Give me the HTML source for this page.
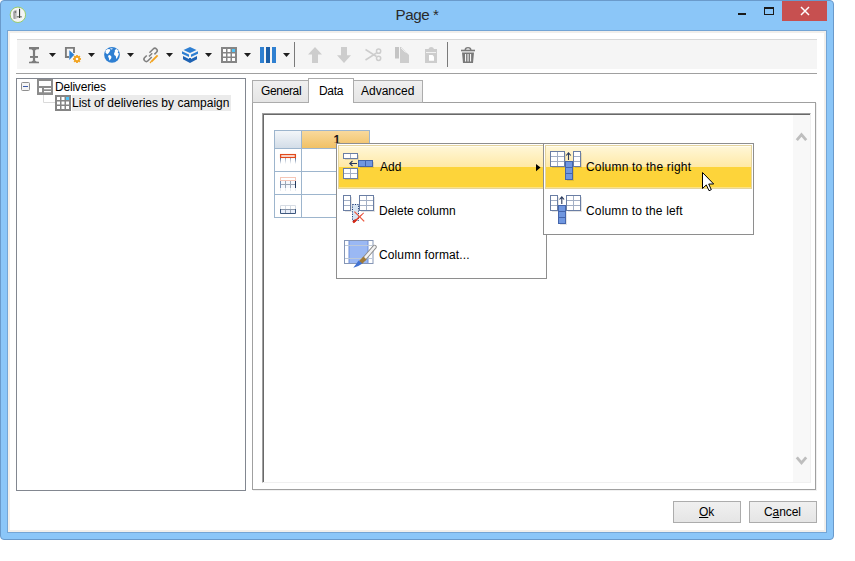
<!DOCTYPE html>
<html><head><meta charset="utf-8">
<style>
*{box-sizing:border-box;margin:0;padding:0}
html,body{width:855px;height:561px;overflow:hidden;background:#fff;font-family:"Liberation Sans",sans-serif;font-size:12px;color:#000}
.a{position:absolute}
.t{position:absolute;white-space:nowrap;line-height:14px}
svg{position:absolute;left:0;top:0;overflow:visible}
</style></head><body>
<!-- window frame -->
<div class="a" style="left:0;top:0;width:834px;height:540px;background:#8BC6F8;border:1px solid #6A9ACB;border-radius:4px"></div>
<div class="a" style="left:7px;top:30px;width:820px;height:503px;background:#fff;border:1px solid #74A5D5"></div>
<div class="a" style="left:8px;top:31px;width:818px;height:501px;border:2px solid #F1EFEC;background:#fff"></div>

<!-- title bar -->
<div class="t" style="left:395.5px;top:6px;font-size:15.2px;line-height:17px;color:#2a2a2a;letter-spacing:-0.45px">Page *</div>
<div class="a" style="left:782px;top:1px;width:45px;height:20px;background:#C75050"></div>
<svg width="855" height="561">
 <path d="M801 7 L809 15 M809 7 L801 15" stroke="#fff" stroke-width="1.45"/>
 <rect x="738" y="13" width="8" height="2" fill="#1a1a1a"/>
 <rect x="764.5" y="7.5" width="9" height="7" fill="none" stroke="#1a1a1a" stroke-width="1"/>
 <rect x="764" y="7" width="10" height="2" fill="#1a1a1a"/>
 <!-- title icon -->
 <defs><linearGradient id="cyl" x1="0" x2="1"><stop offset="0" stop-color="#8A8A8A"/><stop offset="1" stop-color="#E0E0E0"/></linearGradient></defs>
 <circle cx="17.9" cy="14.8" r="7.7" fill="#F4F4F4" stroke="#92C85A" stroke-width="0.9"/>
 <path d="M13.3 11.8 Q14.5 10 17 9.8 L17.3 18.2 Q15.5 19.6 13.5 18.8 Z" fill="url(#cyl)"/>
 <circle cx="15.5" cy="12" r="0.8" fill="#555"/>
 <rect x="19" y="8.8" width="1.1" height="9.2" fill="#303830"/>
 <rect x="16.8" y="16.4" width="5" height="0.9" fill="#404840"/>
</svg>

<!-- toolbar -->
<div class="a" style="left:17px;top:39px;width:800px;height:30px;background:#F5F5F5;border-top:1px solid #D9D9D9"></div>
<div class="a" style="left:16px;top:73px;width:801px;height:1px;background:#A0A0A0"></div>
<svg width="855" height="561">
 <!-- dropdown arrows -->
 <g fill="#1E1E1E">
  <path d="M49 53 H56 L52.5 57 Z"/><path d="M88 53 H95 L91.5 57 Z"/><path d="M127 53 H134 L130.5 57 Z"/>
  <path d="M166 53 H173 L169.5 57 Z"/><path d="M205 53 H212 L208.5 57 Z"/><path d="M244 53 H251 L247.5 57 Z"/>
  <path d="M283 53 H290 L286.5 57 Z"/>
 </g>
 <!-- I-beam -->
 <g fill="#7C7C7C">
  <path d="M29 47 H39 V49.2 Q36 49 35.1 50.5 V60.5 Q36 62 39 61.8 V63.2 H29 V61.8 Q32 62 32.9 60.5 V50.5 Q32 49 29 49.2 Z"/>
  <rect x="30" y="56" width="8" height="1.9"/>
 </g>
 <!-- icon 2 -->
 <path d="M69 57 H65.9 V47.9 H74 V53" fill="none" stroke="#7C7C7C" stroke-width="1.9"/>
 <path d="M69.3 50.3 L74.3 54.8 L69.3 60 Z" fill="#2D80D4"/>
 <g transform="translate(77,59)" fill="#F2A21E">
  <circle r="2.9"/>
  <g><rect x="-0.9" y="-4" width="1.8" height="8"/><rect x="-4" y="-0.9" width="8" height="1.8"/>
  <rect x="-0.9" y="-4" width="1.8" height="8" transform="rotate(45)"/><rect x="-4" y="-0.9" width="8" height="1.8" transform="rotate(45)"/></g>
  <circle r="1.3" fill="#fff"/>
 </g>
 <!-- globe -->
 <circle cx="112" cy="54.85" r="7.85" fill="#2E7FD2"/>
 <g fill="#fff">
 <path d="M105.4 52.4 L105.9 50.2 L107.8 49 L109.9 49.2 L110.2 50.5 L109.4 51.9 L108.3 53.4 L107.2 54.3 L106.4 53.4 Z"/>
 <path d="M110 48.4 L112.6 48.2 L112.3 49.2 L111 49.5 Z"/>
 <path d="M108.3 55.6 L109.9 55.1 L111.5 56.7 L111.2 58.2 L109.9 60.1 L109.3 60.4 L108.9 58.2 L108.1 56.6 Z"/>
 <path d="M115.2 49.8 L116.5 49 L117.8 50.2 L118.4 51.6 L117.6 52.4 L118.7 53.2 L118.7 54.7 L117.8 56.6 L116.8 58.8 L116.2 58.5 L115.8 56 L114.2 55 L114.1 53.1 L114.9 51.9 L114.7 50.8 Z"/>
 </g>
 <!-- link -->
 <g fill="none" stroke="#808080" stroke-width="1.8" transform="translate(150.6,54.9) rotate(-45) scale(0.86)">
  <path d="M0.8 -2.7 H7 A2.7 2.7 0 0 1 7 2.7 H3.6"/>
  <path d="M-0.8 2.7 H-7 A2.7 2.7 0 0 1 -7 -2.7 H-3.6"/>
  <path d="M-2.6 0 H2.6"/>
 </g>
 <path d="M151.4 61.6 L157.6 55.4" stroke="#F2A21E" stroke-width="1.9"/>
 <path d="M150 63 L151.6 61.2" stroke="#F2A21E" stroke-width="1.2"/>
 <!-- box -->
 <g fill="#2E7FD2">
  <path d="M190 47 L196.5 50 L190 53 L183.5 50 Z"/>
  <path d="M182 51.3 L189 54.6 L189 57 L182 53.8 Z"/>
  <path d="M198 51.3 L191 54.6 L191 57 L198 53.8 Z"/>
 </g>
 <path d="M183 56 L189 59 L189 58 L190 58 L191 58 L191 59 L197 56 L197 59.3 L190 63 L183 59.3 Z" fill="#1F63B3"/>
 <!-- grid icon -->
 <g id="gridicon">
 <rect x="221" y="47" width="16" height="16" fill="#858585"/>
 <g fill="#fff">
  <rect x="223" y="49" width="3" height="3"/><rect x="227.5" y="49" width="3" height="3"/>
  <rect x="223" y="53.5" width="3" height="3"/><rect x="227.5" y="53.5" width="3" height="3"/><rect x="232" y="53.5" width="3" height="3"/>
  <rect x="223" y="58" width="3" height="3"/><rect x="227.5" y="58" width="3" height="3"/><rect x="232" y="58" width="3" height="3"/>
 </g>
 <rect x="232" y="49" width="3" height="3" fill="#4FC3F7"/>
 </g>
 <!-- columns -->
 <rect x="260" y="47" width="4" height="16" fill="#2F80D1"/>
 <rect x="266" y="47" width="4" height="16" fill="#1C5FA8"/>
 <rect x="272" y="47" width="4" height="16" fill="#2F80D1"/>
 <rect x="294" y="42" width="1" height="25" fill="#7A7A7A"/>
 <!-- up/down -->
 <path d="M315 47 L322 54.6 H318 V63 H312 V54.6 H308 Z" fill="#CDCDCD"/>
 <path d="M341 47 H347 V55.3 H351 L344 63 L337 55.3 H341 Z" fill="#CDCDCD"/>
 <!-- scissors -->
 <g fill="none" stroke="#CDCDCD" stroke-width="1.5">
  <path d="M365.5 49.5 L376.5 56.5 M365.5 60 L376.5 53"/>
  <circle cx="378.6" cy="51.2" r="2.1"/><circle cx="378.6" cy="58.3" r="2.1"/>
 </g>
 <!-- copy -->
 <rect x="395" y="47" width="4" height="11.5" fill="#C4C4C4"/>
 <path d="M400 47 H401 L409 55 V63 H400 Z" fill="#CDCDCD"/>
 <path d="M401 48 L405 52 H409" fill="none" stroke="#F5F5F5" stroke-width="0.8"/>
 <!-- clipboard -->
 <path d="M425 49 H428.5 Q429 47 431.2 47 Q433.5 47 434 49 H437 V63 H425 Z" fill="#CDCDCD"/>
 <rect x="426" y="52" width="10" height="1" fill="#F2F2F2"/>
 <path d="M429 55 H432.5 L434 56.5 V60.7 H429 Z" fill="#fff"/>
 <rect x="447" y="42" width="1" height="25" fill="#7A7A7A"/>
 <!-- trash -->
 <g fill="#797979">
  <rect x="461" y="49.7" width="14" height="1.6"/>
  <path d="M464.5 50 Q464.5 47 468 47 Q471.5 47 471.5 50 H470 Q470 48.3 468 48.3 Q466 48.3 466 50 Z"/>
  <path d="M462 52.5 H474 L473 63 H463 Z"/>
 </g>
 <g fill="#F5F5F5"><rect x="465" y="54" width="1.1" height="7.5"/><rect x="467.5" y="54" width="1.1" height="7.5"/><rect x="470" y="54" width="1.1" height="7.5"/></g>
</svg>

<!-- tree -->
<div class="a" style="left:16px;top:78px;width:230px;height:413px;border:1px solid #828790;background:#fff"></div>
<div class="a" style="left:72px;top:95px;width:159px;height:16px;background:#EBEBEB"></div>
<div class="t" style="left:55px;top:80px;letter-spacing:-0.2px">Deliveries</div>
<div class="t" style="left:72px;top:96px">List of deliveries by campaign</div>
<svg width="855" height="561">
 <rect x="21.5" y="82.5" width="8" height="8" rx="1" fill="#F4F4F4" stroke="#8F8F8F"/>
 <rect x="23" y="86" width="5" height="1" fill="#3D5BA9"/>
 <rect x="37" y="79" width="16" height="16" fill="#8C8C8C"/>
 <rect x="39" y="81" width="12" height="5" fill="#fff"/>
 <rect x="39" y="88" width="3" height="4.2" fill="#fff"/>
 <rect x="44" y="88" width="7" height="1.3" fill="#fff"/>
 <rect x="44" y="91" width="7" height="1.3" fill="#fff"/>
 <path d="M43.5 95 V102.5 H55" fill="none" stroke="#DADADA"/>
 <g transform="translate(-166,48)">
 <rect x="221" y="47" width="16" height="16" fill="#858585"/>
 <g fill="#fff">
  <rect x="223" y="49" width="3" height="3"/><rect x="227.5" y="49" width="3" height="3"/>
  <rect x="223" y="53.5" width="3" height="3"/><rect x="227.5" y="53.5" width="3" height="3"/><rect x="232" y="53.5" width="3" height="3"/>
  <rect x="223" y="58" width="3" height="3"/><rect x="227.5" y="58" width="3" height="3"/><rect x="232" y="58" width="3" height="3"/>
 </g>
 <rect x="232" y="49" width="3" height="3" fill="#4FC3F7"/>
 </g>
</svg>

<!-- tabs -->
<div class="a" style="left:816px;top:103px;width:1px;height:388px;background:#F0F0F0"></div>
<div class="a" style="left:253px;top:490px;width:564px;height:1px;background:#F0F0F0"></div>
<div class="a" style="left:252px;top:102px;width:564px;height:388px;border:1px solid #A0A0A0;background:#fff"></div>
<div class="a" style="left:252px;top:80px;width:57px;height:23px;border:1px solid #ACACAC;background:linear-gradient(#F0F0F0,#E5E5E5)"></div>
<div class="a" style="left:353px;top:80px;width:70px;height:23px;border:1px solid #ACACAC;background:linear-gradient(#F0F0F0,#E5E5E5)"></div>
<div class="a" style="left:308px;top:78px;width:46px;height:25px;border:1px solid #ACACAC;border-bottom:none;background:#fff"></div>
<div class="t" style="left:261px;top:84px;letter-spacing:-0.35px">General</div>
<div class="t" style="left:319px;top:84px;letter-spacing:-0.3px">Data</div>
<div class="t" style="left:361px;top:84px">Advanced</div>

<!-- inner box -->
<div class="a" style="left:262px;top:113px;width:549px;height:370px;border-style:solid;border-width:1px;border-color:#A0A0A0 #F0F0F0 #F0F0F0 #A0A0A0"></div>
<div class="a" style="left:263px;top:114px;width:547px;height:368px;border-style:solid;border-width:1px 0 0 1px;border-color:#696969"></div>
<div class="a" style="left:793px;top:115px;width:17px;height:367px;background:#F8F8F8"></div>
<svg width="855" height="561">
 <path d="M796.8 140.2 L801.5 134.6 L806.2 140.2" fill="none" stroke="#BEBEBE" stroke-width="2.8"/>
 <path d="M796.8 457.3 L801.5 462.9 L806.2 457.3" fill="none" stroke="#BEBEBE" stroke-width="2.8"/>
</svg>

<!-- buttons -->
<div class="a" style="left:673px;top:501px;width:68px;height:22px;border:1px solid #ACACAC;background:linear-gradient(#F0F0F0,#E5E5E5)"></div>
<div class="a" style="left:749px;top:501px;width:68px;height:22px;border:1px solid #ACACAC;background:linear-gradient(#F0F0F0,#E5E5E5)"></div>
<div class="t" style="left:699px;top:505px"><u>O</u>k</div>
<div class="t" style="left:764px;top:505px;letter-spacing:-0.1px">C<u>a</u>ncel</div>

<!-- grid -->
<div class="a" style="left:274px;top:130px;width:96px;height:88px;border:1px solid #9DB5CD;background:#fff"></div>
<div class="a" style="left:275px;top:131px;width:26px;height:17px;background:linear-gradient(#F3F6F9,#D3DDE8)"></div>
<div class="a" style="left:302px;top:131px;width:67px;height:17px;background:linear-gradient(#F8D99C,#F1C165)"></div>
<div class="a" style="left:301px;top:131px;width:1px;height:86px;background:#9DB5CD"></div>
<div class="a" style="left:275px;top:148px;width:94px;height:1px;background:#9DB5CD"></div>
<div class="a" style="left:275px;top:171px;width:94px;height:1px;background:#9DB5CD"></div>
<div class="a" style="left:275px;top:194px;width:94px;height:1px;background:#9DB5CD"></div>
<div class="a" style="left:326px;top:131px;width:20px;height:12px;overflow:hidden"><div class="t" style="left:7.5px;top:2px;color:#1a1a1a;font-weight:bold">1</div></div>
<svg width="855" height="561">
 <defs>
  <linearGradient id="fadeD" x1="0" y1="0" x2="0" y2="1"><stop offset="0" stop-color="#4F6A90"/><stop offset="1" stop-color="#4F6A90" stop-opacity="0"/></linearGradient>
  <linearGradient id="fadeU" x1="0" y1="1" x2="0" y2="0"><stop offset="0" stop-color="#9AA8BA"/><stop offset="1" stop-color="#9AA8BA" stop-opacity="0.2"/></linearGradient>
 </defs>
 <rect x="280.6" y="154.6" width="14.8" height="2.8" fill="#fff" stroke="#E14A1C" stroke-width="1.3"/>
 <g fill="url(#fadeD)"><rect x="280" y="158" width="1" height="6"/><rect x="285" y="158" width="1" height="6" opacity="0.6"/><rect x="290" y="158" width="1" height="6" opacity="0.6"/><rect x="295" y="158" width="1" height="6"/></g>
 <rect x="280.5" y="177.5" width="15" height="3" fill="#fff" stroke="#F5C6B6"/>
 <rect x="281" y="181" width="14" height="7" fill="#F6F8FD"/>
 <rect x="280" y="181" width="1" height="7" fill="#7890B2"/>
 <rect x="295" y="181" width="1" height="7" fill="#23395C"/>
 <path d="M281 184.5 H295 M285.5 181 V188 M290.5 181 V188" stroke="#9AA6B6"/>
 <path d="M280.5 188 V191 M285.5 188 V191 M290.5 188 V191 M295.5 188 V191" stroke="#E6EAF0"/>
 <path d="M280.5 205.5 V209 M285.5 205.5 V209 M290.5 205.5 V209 M295.5 205.5 V209 M280.5 205.5 H295.5" stroke="#D6DCE4"/>
 <rect x="281" y="209.5" width="14" height="3.5" fill="#E8EEFA"/>
 <path d="M280.5 209 V213.5 H295.5 V209" fill="none" stroke="#3C577E"/>
 <path d="M281 209.5 H295" stroke="#8A98AC"/>
 <path d="M285.5 210 V213 M290.5 210 V213" stroke="#9AA6B6"/>
</svg>

<!-- context menu -->
<div class="a" style="left:336px;top:143px;width:211px;height:136px;border:1px solid #8E8E8E;background:#fff"></div>
<div class="a" style="left:338px;top:145px;width:207px;height:44px;border:1px solid #E4D49E;box-shadow:inset 0 1px 0 #FFFCF0,inset 0 -1px 0 #FDE281;background:linear-gradient(#FFF7D8 0,#FFE9A6 21px,#FDD43A 21px,#FDD43A 100%)"></div>
<div class="t" style="left:380px;top:160px">Add</div>
<div class="t" style="left:379px;top:204px">Delete column</div>
<div class="t" style="left:379px;top:248px;letter-spacing:0.12px">Column format...</div>
<svg width="855" height="561">
 <path d="M536 164 L540.5 167.6 L536 171.2 Z" fill="#000"/>
 <!-- add icon -->
 <g fill="#000" opacity="0.10"><rect x="345" y="155" width="14" height="5"/><rect x="345" y="170" width="14" height="10"/><rect x="360" y="162" width="14" height="6"/></g>
 <rect x="343.5" y="153.5" width="14" height="5" fill="#fff" stroke="#6A7EA4"/>
 <path d="M350.5 154 V158" stroke="#A3AFC5"/>
 <rect x="343.5" y="168.5" width="14" height="10" fill="#fff" stroke="#6A7EA4"/>
 <path d="M350.5 169 V178 M344 173.5 H357" stroke="#A3AFC5"/>
 <rect x="358.5" y="160.5" width="14" height="6" fill="#7097E0" stroke="#4465AC"/>
 <path d="M365.5 161 V166" stroke="#4465AC"/>
 <path d="M350 163.5 H357 M352.5 161 L349.8 163.5 L352.5 166" fill="none" stroke="#2A3A5C" stroke-width="1.1"/>
 <!-- delete icon -->
 <g fill="#000" opacity="0.10"><rect x="345" y="197" width="7" height="15"/><rect x="361" y="197" width="14" height="15"/></g>
 <rect x="343.5" y="195.5" width="7" height="15" fill="#fff" stroke="#6A7EA4"/>
 <path d="M344 200.5 H350 M344 205.5 H350" stroke="#A3AFC5"/>
 <rect x="359.5" y="195.5" width="14" height="15" fill="#fff" stroke="#6A7EA4"/>
 <path d="M366.5 196 V210 M360 200.5 H373 M360 205.5 H373" stroke="#A3AFC5"/>
 <rect x="352.5" y="204.5" width="6" height="16" fill="#D6E4F2"/><rect x="352.5" y="204.5" width="6" height="16" fill="none" stroke="#1E3C7A" stroke-width="1" stroke-dasharray="1.2 1.2"/>
 <path d="M353 222.3 Q357 218 363.6 212.6 L363.9 213.2 Q358 219 354.6 222.8 Z" fill="#E53A24"/><path d="M354.4 211.6 Q359 216 364.2 221.4" fill="none" stroke="#EC5A40" stroke-width="1.3"/><path d="M353 222.3 L356 219.8" stroke="#D42A18" stroke-width="2.2"/>
 <!-- format icon -->
 <rect x="344.5" y="240.5" width="28.5" height="23" fill="#fff" stroke="#8596B6"/>
 <rect x="349" y="241" width="19" height="22" fill="#9AB8F4"/>
 <path d="M349 241 V263 M368 241 V263" stroke="#6F8FD8"/>
 <path d="M345 245.5 H372 M345 258.5 H372" stroke="#BCC8D8"/>
 <path d="M374.5 247 L364.5 258.5" stroke="#8C8C8C" stroke-width="4.4" stroke-linecap="round"/>
 <path d="M374.5 247 L364.5 258.5" stroke="#F2F2F2" stroke-width="2.6" stroke-linecap="round"/>
 <path d="M365 258 L360.5 262.5" stroke="#A07A38" stroke-width="4.2"/>
 <path d="M358.5 260.5 Q356 264.5 353.3 267.8 Q358.5 266.5 362.5 263.5 Z" fill="#4272D2"/>
</svg>

<!-- submenu -->
<div class="a" style="left:543px;top:143px;width:211px;height:92px;border:1px solid #8E8E8E;background:#fff"></div>
<div class="a" style="left:545px;top:145px;width:207px;height:44px;border:1px solid #E4D49E;box-shadow:inset 0 1px 0 #FFFCF0,inset 0 -1px 0 #FDE281;background:linear-gradient(#FFF7D8 0,#FFE9A6 21px,#FDD43A 21px,#FDD43A 100%)"></div>
<div class="t" style="left:586px;top:160px;letter-spacing:0.2px">Column to the right</div>
<div class="t" style="left:586px;top:204px;letter-spacing:0.15px">Column to the left</div>
<svg width="855" height="561">
 <g fill="#000" opacity="0.10"><rect x="552" y="153" width="14" height="15"/><rect x="575" y="153" width="7" height="15"/><rect x="567" y="163" width="7" height="18"/></g>
 <rect x="550.5" y="151.5" width="14" height="15" fill="#fff" stroke="#6A7EA4"/>
 <path d="M557.5 152 V166 M551 156.5 H564 M551 161.5 H564" stroke="#A3AFC5"/>
 <rect x="573.5" y="151.5" width="7" height="15" fill="#fff" stroke="#6A7EA4"/>
 <path d="M574 156.5 H580 M574 161.5 H580" stroke="#A3AFC5"/>
 <rect x="565.5" y="161.5" width="7" height="18" fill="#7097E0" stroke="#4465AC"/>
 <path d="M566 167.5 H572 M566 173.5 H572" stroke="#4465AC"/>
 <path d="M568.5 160 V153 M566.2 155.5 L568.5 152.8 L570.8 155.5" fill="none" stroke="#2A3A5C" stroke-width="1.1"/>
 <g fill="#000" opacity="0.10"><rect x="552" y="197" width="7" height="15"/><rect x="568" y="197" width="14" height="15"/><rect x="560" y="207" width="7" height="18"/></g>
 <rect x="550.5" y="195.5" width="7" height="15" fill="#fff" stroke="#6A7EA4"/>
 <path d="M551 200.5 H557 M551 205.5 H557" stroke="#A3AFC5"/>
 <rect x="566.5" y="195.5" width="14" height="15" fill="#fff" stroke="#6A7EA4"/>
 <path d="M573.5 196 V210 M567 200.5 H580 M567 205.5 H580" stroke="#A3AFC5"/>
 <rect x="558.5" y="205.5" width="7" height="18" fill="#7097E0" stroke="#4465AC"/>
 <path d="M559 211.5 H565 M559 217.5 H565" stroke="#4465AC"/>
 <path d="M561.8 204 V197 M559.5 199.5 L561.8 196.8 L564.1 199.5" fill="none" stroke="#2A3A5C" stroke-width="1.1"/>
 <!-- cursor -->
 <path d="M702.5 172.5 V188.5 L706.3 184.9 L709 190.7 L711.3 189.7 L708.7 184 H713.7 Z" fill="#fff" stroke="#000" stroke-width="1" stroke-linejoin="miter"/>
</svg>
</body></html>
